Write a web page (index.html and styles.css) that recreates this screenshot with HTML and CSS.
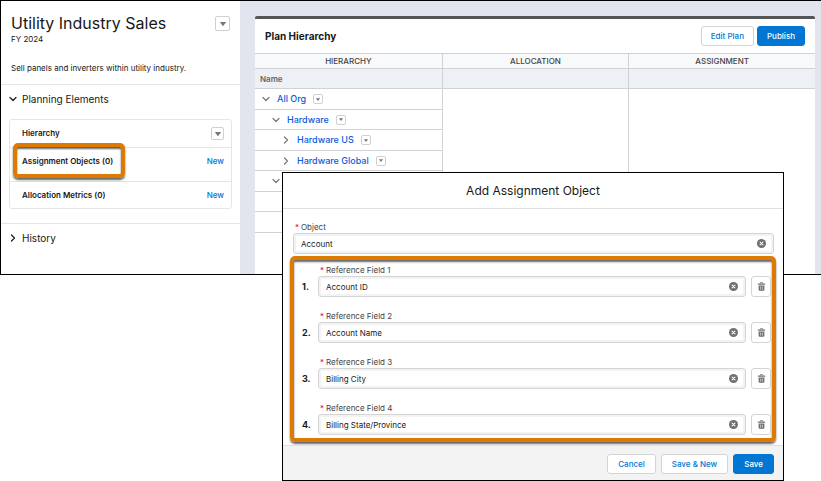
FILE: index.html
```
<!DOCTYPE html>
<html lang="en">

<head>
  <meta charset="UTF-8">
  <meta name="viewport" content="width=device-width, initial-scale=1">
  <title>Utility Industry Sales</title>
  <link rel="stylesheet" href="styles.css">
</head>

<body>

  <svg class="sprite" aria-hidden="true">
    <symbol id="chevron-down" viewBox="0 0 8 8"><path d="M1 2.5 L4 5.5 L7 2.5" fill="none" stroke="currentColor" stroke-width="1.2" stroke-linecap="round" stroke-linejoin="round"/></symbol>
    <symbol id="chevron-right" viewBox="0 0 8 8"><path d="M2.5 1 L5.5 4 L2.5 7" fill="none" stroke="currentColor" stroke-width="1.2" stroke-linecap="round" stroke-linejoin="round"/></symbol>
    <symbol id="arrow" viewBox="0 0 6 4"><path d="M0.4 0 H5.6 Q6.2 0 5.8 0.6 L3.4 3.7 Q3 4.1 2.6 3.7 L0.2 0.6 Q-0.2 0 0.4 0Z" fill="currentColor"/></symbol>
    <symbol id="clear" viewBox="0 0 8 8"><circle cx="4" cy="4" r="4" fill="currentColor"/><path d="M2.7 2.7 L5.3 5.3 M5.3 2.7 L2.7 5.3" stroke="#fff" stroke-width="0.9" stroke-linecap="round"/></symbol>
    <symbol id="trash" viewBox="0 0 8 9"><path d="M2.8 1.8 V1.2 Q2.8 0.5 3.4 0.5 H4.6 Q5.2 0.5 5.2 1.2 V1.8" fill="none" stroke="currentColor" stroke-width="0.8"/><rect x="0.3" y="1.6" width="7.4" height="1.1" rx="0.5" fill="currentColor"/><path d="M1.1 3.5 H6.9 V7.8 Q6.9 8.8 5.9 8.8 H2.1 Q1.1 8.8 1.1 7.8Z" fill="currentColor"/><path d="M3.1 4.6 V7.6 M4.9 4.6 V7.6" stroke="#fff" stroke-width="0.6"/></symbol>
  </svg>

  <div class="workspace">
    <aside class="sidebar">
      <header class="plan-header">
        <div>
          <h1>Utility Industry Sales</h1>
          <p class="period">FY 2024</p>
        </div>
        <button class="menu-button menu-large" aria-label="Plan actions"><svg><use href="#arrow"/></svg></button>
      </header>
      <p class="description">Sell panels and inverters within utility industry.</p>

      <section class="section">
        <button class="section-toggle"><svg><use href="#chevron-down"/></svg>Planning Elements</button>
        <ul class="elements">
          <li>
            <span>Hierarchy</span>
            <button class="menu-button menu-medium" aria-label="Hierarchy actions"><svg><use href="#arrow"/></svg></button>
          </li>
          <li class="assignment">
            <span>Assignment Objects (0)</span>
            <a href="#">New</a>
            <div class="callout callout-item"></div>
          </li>
          <li>
            <span>Allocation Metrics (0)</span>
            <a href="#">New</a>
          </li>
        </ul>
      </section>
      <section class="section">
        <button class="section-toggle"><svg><use href="#chevron-right"/></svg>History</button>
      </section>
    </aside>

    <main class="content">
      <div class="panel">
        <header class="panel-header">
          <h2>Plan Hierarchy</h2>
          <div class="actions">
            <button class="button">Edit Plan</button>
            <button class="button button-brand">Publish</button>
          </div>
        </header>
        <table class="tree">
          <thead>
            <tr class="groups">
              <th>HIERARCHY</th>
              <th>ALLOCATION</th>
              <th>ASSIGNMENT</th>
            </tr>
            <tr class="columns">
              <th>Name</th>
              <th></th>
              <th></th>
            </tr>
          </thead>
          <tbody>
            <tr>
              <td><div class="node"><svg><use href="#chevron-down"/></svg><a href="#">All Org</a><button class="menu-button menu-small" aria-label="All Org actions"><svg><use href="#arrow"/></svg></button></div></td>
              <td></td>
              <td></td>
            </tr>
            <tr>
              <td><div class="node level-2"><svg><use href="#chevron-down"/></svg><a href="#">Hardware</a><button class="menu-button menu-small" aria-label="Hardware actions"><svg><use href="#arrow"/></svg></button></div></td>
              <td></td>
              <td></td>
            </tr>
            <tr>
              <td><div class="node level-3"><svg><use href="#chevron-right"/></svg><a href="#">Hardware US</a><button class="menu-button menu-small" aria-label="Hardware US actions"><svg><use href="#arrow"/></svg></button></div></td>
              <td></td>
              <td></td>
            </tr>
            <tr>
              <td><div class="node level-3"><svg><use href="#chevron-right"/></svg><a href="#">Hardware Global</a><button class="menu-button menu-small" aria-label="Hardware Global actions"><svg><use href="#arrow"/></svg></button></div></td>
              <td></td>
              <td></td>
            </tr>
            <tr>
              <td><div class="node level-2"><svg><use href="#chevron-down"/></svg></div></td>
              <td></td>
              <td></td>
            </tr>
            <tr><td></td><td></td><td></td></tr>
            <tr><td></td><td></td><td></td></tr>
          </tbody>
        </table>
      </div>
    </main>
  </div>

  <form class="modal" role="dialog" aria-labelledby="modal-title">
    <h2 class="modal-title" id="modal-title">Add Assignment Object</h2>

    <div class="modal-body">
      <div class="field object-field">
        <label for="object"><abbr>*</abbr>Object</label>
        <div class="control">
          <input type="text" id="object" value="Account">
          <button type="button" aria-label="Clear"><svg><use href="#clear"/></svg></button>
        </div>
      </div>

      <div class="callout references">
        <div class="reference">
          <span class="number">1.</span>
          <div class="field">
            <label for="ref1"><abbr>*</abbr>Reference Field 1</label>
            <div class="control">
              <input type="text" id="ref1" value="Account ID">
              <button type="button" aria-label="Clear"><svg><use href="#clear"/></svg></button>
            </div>
          </div>
          <button type="button" class="delete" aria-label="Delete"><svg><use href="#trash"/></svg></button>
        </div>
        <div class="reference">
          <span class="number">2.</span>
          <div class="field">
            <label for="ref2"><abbr>*</abbr>Reference Field 2</label>
            <div class="control">
              <input type="text" id="ref2" value="Account Name">
              <button type="button" aria-label="Clear"><svg><use href="#clear"/></svg></button>
            </div>
          </div>
          <button type="button" class="delete" aria-label="Delete"><svg><use href="#trash"/></svg></button>
        </div>
        <div class="reference">
          <span class="number">3.</span>
          <div class="field">
            <label for="ref3"><abbr>*</abbr>Reference Field 3</label>
            <div class="control">
              <input type="text" id="ref3" value="Billing City">
              <button type="button" aria-label="Clear"><svg><use href="#clear"/></svg></button>
            </div>
          </div>
          <button type="button" class="delete" aria-label="Delete"><svg><use href="#trash"/></svg></button>
        </div>
        <div class="reference">
          <span class="number">4.</span>
          <div class="field">
            <label for="ref4"><abbr>*</abbr>Reference Field 4</label>
            <div class="control">
              <input type="text" id="ref4" value="Billing State/Province">
              <button type="button" aria-label="Clear"><svg><use href="#clear"/></svg></button>
            </div>
          </div>
          <button type="button" class="delete" aria-label="Delete"><svg><use href="#trash"/></svg></button>
        </div>
      </div>
    </div>

    <footer class="modal-footer">
      <button type="button" class="button">Cancel</button>
      <button type="button" class="button">Save &amp; New</button>
      <button type="button" class="button button-brand">Save</button>
    </footer>
  </form>

</body>

</html>
```
FILE: styles.css
```
* {
  box-sizing: border-box;
}

body {
  margin: 0;
  background: #fff;
  color: #181818;
  font-family: Inter, 'Liberation Sans', sans-serif;
  font-size: 8px;
  line-height: 12px;
}

h1, h2, p, ul {
  margin: 0;
  padding: 0;
}

button, input {
  font: inherit;
  color: inherit;
  margin: 0;
  padding: 0;
  border: none;
  background: none;
}

button {
  cursor: pointer;
}

a {
  color: #0176d3;
  text-decoration: none;
}

svg {
  display: block;
  width: 8px;
  height: 8px;
  flex: none;
}

.sprite {
  display: none;
}

.workspace {
  display: flex;
  height: 275px;
  border: 1px solid #000;
  border-right: none;
  overflow: hidden;
}

/* Sidebar */
.sidebar {
  width: 239px;
  flex: none;
}

.plan-header {
  display: flex;
  justify-content: space-between;
  padding: 12px 10px 0;
}

h1 {
  font-size: 16px;
  font-weight: 400;
  line-height: 20px;
}

.period {
  line-height: 12px;
}

.description {
  padding: 17px 10px 10px;
}

.section {
  border-top: 1px solid #e5e5e5;
  padding: 8px 8px 14px;
}

.section-toggle {
  display: flex;
  align-items: center;
  gap: 5px;
  font-size: 10px;
  line-height: 12px;
}

.elements {
  list-style: none;
  margin-top: 14px;
  border: 1px solid #e5e5e5;
  border-radius: 3px;
}

.elements li {
  display: flex;
  align-items: flex-start;
  justify-content: space-between;
  padding: 7px 7px 7px 12px;
  font-weight: 600;
}

.elements li + li {
  border-top: 1px solid #e5e5e5;
}

.elements a {
  font-weight: 500;
}

.elements .assignment {
  position: relative;
  padding-bottom: 14px;
}

.menu-button {
  display: flex;
  align-items: center;
  justify-content: center;
  flex: none;
  border: 1px solid #d0d0d0;
  border-radius: 2px;
  color: #777;
}

.menu-large {
  width: 15px;
  height: 15px;
  margin-top: 3px;
}

.menu-medium {
  width: 13px;
  height: 13px;
}

.menu-small {
  width: 10px;
  height: 10px;
}

.menu-button svg {
  width: 6px;
  height: 4px;
}

.menu-small svg {
  width: 4px;
  height: 3px;
}

.callout {
  border: 4px solid #dd7a01;
  border-radius: 5px;
  box-shadow: 0 2px 2px rgba(0, 0, 0, 0.6), inset 0 2px 2px rgba(0, 0, 0, 0.6);
}

.callout-item {
  position: absolute;
  top: -5px;
  left: 3px;
  width: 112px;
  height: 35px;
  pointer-events: none;
}

/* Hierarchy panel */
.content {
  flex: 1;
  padding: 15px 6px 0 15px;
  background: #e0e5ee;
}

.panel {
  height: 100%;
  background: #fff;
  border-top: 3px solid #555;
  border-radius: 2px 2px 0 0;
}

.panel-header {
  display: flex;
  align-items: center;
  justify-content: space-between;
  padding: 7px 10px;
}

.panel-header h2 {
  font-size: 10px;
  font-weight: 700;
}

.actions {
  display: flex;
  gap: 3px;
}

.button {
  height: 20px;
  padding: 0 9px;
  border: 1px solid #d4d4d4;
  border-radius: 3px;
  background: #fff;
  color: #0176d3;
  font-weight: 500;
}

.button-brand {
  border-color: #0176d3;
  background: #0176d3;
  color: #fff;
}

.tree {
  width: 100%;
  table-layout: fixed;
  border-collapse: separate;
  border-spacing: 0;
}

.tree th,
.tree td {
  padding: 0;
}

.tree th + th,
.tree td + td {
  border-left: 1px solid #d0d2d5;
}

.groups th {
  height: 16px;
  border-top: 1px solid #d0d2d5;
  border-bottom: 1px solid #d0d2d5;
  background: #f8f9fb;
  color: #444;
  font-weight: 500;
}

.columns th {
  height: 20px;
  padding: 0 5px;
  border-bottom: 1px solid #d0d2d5;
  background: #edf0f5;
  color: #666;
  font-weight: 600;
  text-align: left;
}

.tree td {
  height: 20px;
}

.tree tr:nth-child(odd) td {
  height: 21px;
}

.tree td:first-child {
  border-bottom: 1px solid #d0d2d5;
}

.node {
  display: flex;
  align-items: center;
  gap: 7px;
  padding-left: 7px;
  font-size: 9px;
  color: #777;
}

.node a {
  color: #0b5cde;
  font-weight: 500;
}

.level-2 {
  padding-left: 17px;
}

.level-3 {
  padding-left: 27px;
}

/* Modal */
.modal {
  position: absolute;
  top: 172px;
  left: 282px;
  right: 37px;
  border: 1px solid #000;
  background: #fff;
}

.modal-title {
  padding: 9px;
  border-bottom: 1px solid #e0e0e0;
  font-size: 12px;
  font-weight: 400;
  line-height: 17px;
  text-align: center;
}

.modal-body {
  padding: 12px 7px 3px;
}

.field {
  flex: 1;
}

.object-field {
  margin: 0 2px 2px 3px;
}

.field label {
  display: block;
  padding-left: 2px;
  color: #444;
}

.field abbr {
  display: inline-block;
  width: 6px;
  color: #ea001e;
}

.control {
  display: flex;
  align-items: center;
  height: 21px;
  padding: 0 7px;
  border: 1px solid #d4d4d4;
  border-radius: 3px;
  box-shadow: inset 0 0 0 2px #f3f3f3;
}

.control input {
  flex: 1;
  min-width: 0;
  outline: none;
}

.control button,
.delete {
  color: #707070;
}

.control svg,
.delete svg {
  width: 9px;
  height: 9px;
}

.references {
  display: flex;
  flex-direction: column;
  gap: 13px;
  padding: 4px 1px 3px 8px;
}

.reference {
  display: flex;
  align-items: flex-end;
}

.number {
  width: 16px;
  font-size: 9px;
  font-weight: 700;
  line-height: 20px;
}

.delete {
  display: flex;
  align-items: center;
  justify-content: center;
  width: 20px;
  height: 21px;
  margin-left: 5px;
  border: 1px solid #d4d4d4;
  border-radius: 3px;
}

.modal-footer {
  display: flex;
  justify-content: flex-end;
  gap: 5px;
  padding: 8px 9px 6px;
  border-top: 1px solid #e0e0e0;
  background: #f3f3f3;
}

.modal-footer .button {
  padding: 0 10px;
}
```
